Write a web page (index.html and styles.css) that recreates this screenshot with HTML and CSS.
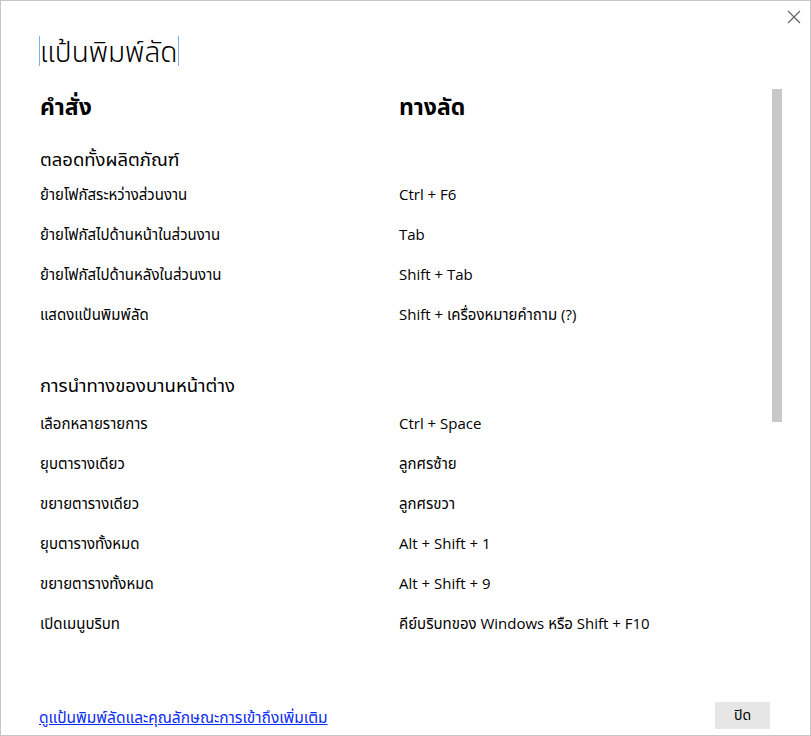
FILE: index.html
```html
<!DOCTYPE html>
<html lang="th">
<head>
<meta charset="utf-8">
<title>แป้นพิมพ์ลัด</title>
<link rel="stylesheet" href="styles.css">
</head>
<body>
<div class="dialog">
  <button class="close" aria-label="ปิด">
    <svg width="14" height="14" viewBox="0 0 14 14"><path d="M1 1 L13 13 M13 1 L1 13" stroke="#5f5f5f" stroke-width="1.1" fill="none"/></svg>
  </button>
  <header class="head">
    <h1 class="title">แป้นพิมพ์ลัด</h1>
  </header>
  <div class="middle">
    <div class="content">
      <div class="grid colhead">
        <div>คำสั่ง</div>
        <div>ทางลัด</div>
      </div>
      <section class="group">
        <h2 class="gtitle">ตลอดทั้งผลิตภัณฑ์</h2>
        <div class="grid row"><div>ย้ายโฟกัสระหว่างส่วนงาน</div><div>Ctrl + F6</div></div>
        <div class="grid row"><div>ย้ายโฟกัสไปด้านหน้าในส่วนงาน</div><div>Tab</div></div>
        <div class="grid row"><div>ย้ายโฟกัสไปด้านหลังในส่วนงาน</div><div>Shift + Tab</div></div>
        <div class="grid row"><div>แสดงแป้นพิมพ์ลัด</div><div>Shift + เครื่องหมายคำถาม (?)</div></div>
      </section>
      <section class="group second">
        <h2 class="gtitle">การนำทางของบานหน้าต่าง</h2>
        <div class="grid row"><div>เลือกหลายรายการ</div><div>Ctrl + Space</div></div>
        <div class="grid row"><div>ยุบตารางเดียว</div><div>ลูกศรซ้าย</div></div>
        <div class="grid row"><div>ขยายตารางเดียว</div><div>ลูกศรขวา</div></div>
        <div class="grid row"><div>ยุบตารางทั้งหมด</div><div>Alt + Shift + 1</div></div>
        <div class="grid row"><div>ขยายตารางทั้งหมด</div><div>Alt + Shift + 9</div></div>
        <div class="grid row"><div>เปิดเมนูบริบท</div><div>คีย์บริบทของ Windows หรือ Shift + F10</div></div>
      </section>
    </div>
    <div class="track"><div class="thumb"></div></div>
  </div>
  <footer class="foot">
    <a class="more" href="#">ดูแป้นพิมพ์ลัดและคุณลักษณะการเข้าถึงเพิ่มเติม</a>
    <button class="btn">ปิด</button>
  </footer>
</div>
</body>
</html>
```
FILE: styles.css
```css
html, body {
  margin: 0;
  padding: 0;
  background: #fff;
}
body {
  font-family: "Open Sans", "Noto Sans Thai", "Noto Sans Thai UI", "Leelawadee UI", Tahoma, "Noto Sans", sans-serif;
  color: #000;
}
.dialog {
  position: relative;
  box-sizing: border-box;
  width: 811px;
  height: 736px;
  border: 1px solid #c6c6c6;
  display: flex;
  flex-direction: column;
  overflow: hidden;
}
.close {
  position: absolute;
  top: 8px;
  right: 8px;
  width: 16px;
  height: 16px;
  padding: 0;
  border: 0;
  background: transparent;
  display: flex;
  align-items: center;
  justify-content: center;
}
.head {
  padding: 35px 0 0 38px;
  height: 52px;
}
.title {
  display: inline-block;
  margin: 0;
  font-size: 28px;
  font-weight: 300;
  line-height: 30px;
  padding: 0 1px 0 0;
  border-left: 1px solid #7eaef0;
  border-right: 1px solid #7eaef0;
}
.middle {
  flex: 1;
  display: flex;
  min-height: 0;
}
.content {
  flex: 1;
  padding-left: 39px;
}
.grid {
  display: grid;
  grid-template-columns: 359px 1fr;
}
.colhead {
  font-size: 23px;
  font-weight: 700;
  height: 36px;
  line-height: 36px;
  margin-bottom: 20px;
}
.gtitle {
  margin: 0;
  font-size: 18.5px;
  font-weight: 400;
  height: 30px;
  line-height: 30px;
}
.row {
  font-size: 15px;
  height: 40px;
  line-height: 40px;
}
.second {
  margin-top: 36px;
}
.second .gtitle {
  height: 33px;
  line-height: 30px;
}
.track {
  width: 10px;
  margin: 0 28px 0 0;
}
.thumb {
  width: 10px;
  height: 333px;
  margin-top: 1px;
  background: #c8c8c8;
}
.foot {
  padding: 11px 40px 6px 38px;
  display: flex;
  align-items: center;
  justify-content: space-between;
}
.more {
  font-size: 15.5px;
  line-height: 20px;
  margin-top: 3px;
  color: #0b2cf2;
  text-decoration: underline;
}
.btn {
  width: 55px;
  height: 27px;
  border: 0;
  background: #e6e6e6;
  font-family: inherit;
  font-size: 14px;
  color: #000;
  padding: 0;
}
```
